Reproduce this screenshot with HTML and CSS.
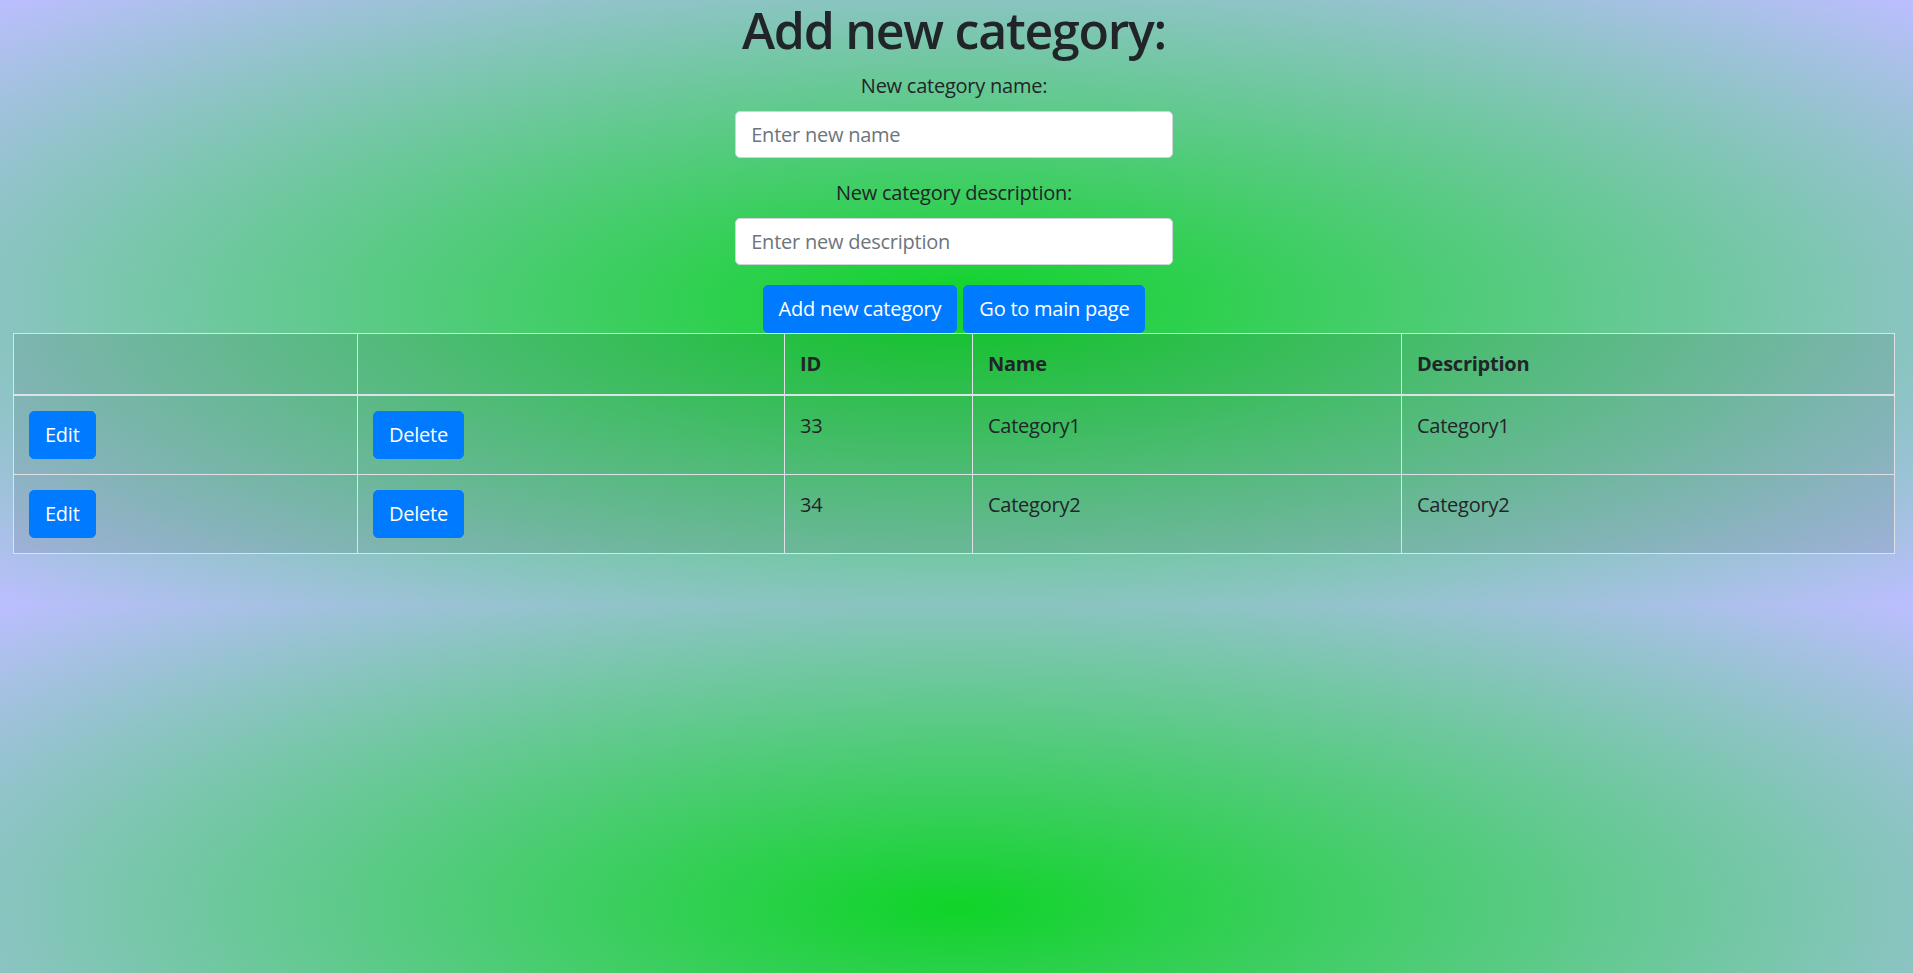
FILE: index.html
```html
<!DOCTYPE html>
<html lang="en">
<head>
<meta charset="utf-8">
<title>Add new category</title>
<link rel="stylesheet" href="styles.css">
</head>
<body>
<main class="page">
  <h1 class="title">Add new category:</h1>
  <div class="form-group">
    <label class="label" for="name">New category name:</label>
    <input class="input" id="name" type="text" placeholder="Enter new name">
  </div>
  <div class="form-group">
    <label class="label" for="desc">New category description:</label>
    <input class="input" id="desc" type="text" placeholder="Enter new description">
  </div>
  <div class="actions">
    <button class="btn" type="button">Add new category</button>
    <button class="btn" type="button">Go to main page</button>
  </div>
  <table class="table">
    <colgroup>
      <col class="col-edit">
      <col class="col-delete">
      <col class="col-id">
      <col class="col-name">
      <col class="col-desc">
    </colgroup>
    <thead>
      <tr>
        <th></th>
        <th></th>
        <th>ID</th>
        <th>Name</th>
        <th>Description</th>
      </tr>
    </thead>
    <tbody>
      <tr>
        <td><button class="btn" type="button">Edit</button></td>
        <td><button class="btn" type="button">Delete</button></td>
        <td>33</td>
        <td>Category1</td>
        <td>Category1</td>
      </tr>
      <tr>
        <td><button class="btn" type="button">Edit</button></td>
        <td><button class="btn" type="button">Delete</button></td>
        <td>34</td>
        <td>Category2</td>
        <td>Category2</td>
      </tr>
    </tbody>
  </table>
</main>
</body>
</html>
```

FILE: styles.css
```css
html {
  background-color: rgb(188, 190, 255);
  background-image: radial-gradient(rgb(15, 212, 40), rgb(188, 190, 255));
  background-size: 100% 605px;
  background-repeat: repeat;
  min-height: 100%;
}

body {
  margin: 0;
  padding: 0 5px 0 0;
  font-family: "Open Sans", "Noto Sans", "Liberation Sans", sans-serif;
  font-size: 20px;
  line-height: 1.5;
  color: #212529;
  letter-spacing: -0.012em;
}

.page {
  display: flex;
  flex-direction: column;
  align-items: center;
}

.title {
  margin: 0 0 11px;
  font-size: 50px;
  font-weight: 600;
  line-height: 1.2;
  letter-spacing: -0.025em;
}

.form-group {
  display: flex;
  flex-direction: column;
  align-items: center;
  margin-bottom: 20px;
}

.label {
  display: block;
  margin-bottom: 10px;
}

.input {
  box-sizing: border-box;
  width: 437.5px;
  height: 47px;
  padding: 7.5px 15px;
  font-family: inherit;
  font-size: 20px;
  line-height: 1.5;
  letter-spacing: inherit;
  color: #495057;
  background: #fff;
  border: 1px solid #ced4da;
  border-radius: 5px;
  outline: none;
}

.input::placeholder {
  color: #6c757d;
  opacity: 1;
}

.actions {
  display: flex;
  justify-content: center;
  gap: 6px;
}

.btn {
  display: inline-block;
  padding: 8px 15px;
  font-family: inherit;
  font-size: 20px;
  line-height: 30px;
  letter-spacing: inherit;
  color: #fff;
  background-color: #007bff;
  border: 1px solid #007bff;
  border-radius: 5px;
  cursor: pointer;
}

.table {
  align-self: stretch;
  margin: 0 13px 20px;
  border-collapse: collapse;
  table-layout: fixed;
  background-color: rgba(0, 0, 0, 0.08);
  color: #212529;
}

.col-edit { width: 344px; }
.col-delete { width: 427px; }
.col-id { width: 188px; }
.col-name { width: 429px; }
.col-desc { width: auto; }

.table th,
.table td {
  padding: 15px;
  border: 1px solid #dee2e6;
  text-align: left;
}

.table th {
  font-weight: 700;
  vertical-align: bottom;
  border-bottom: 2px solid #dee2e6;
}

.table td {
  vertical-align: top;
}
```
